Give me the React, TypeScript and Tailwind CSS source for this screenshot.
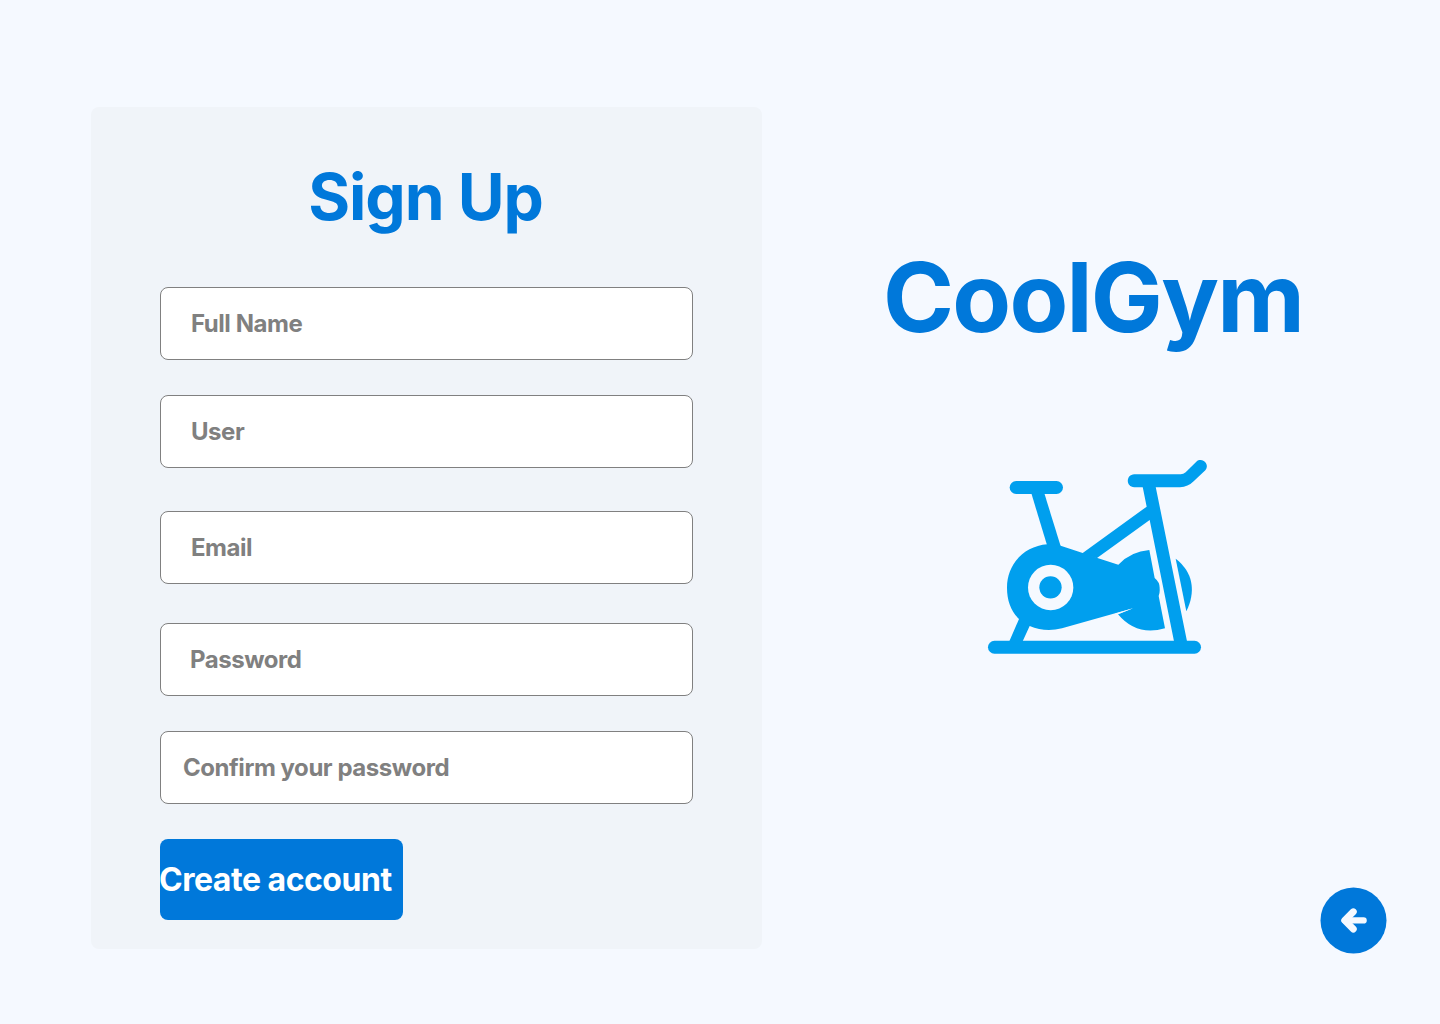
const fields = [
  { label: "Full Name", type: "text", box: "pl-[30px]" },
  { label: "User", type: "text", box: "mt-[35px] pl-[30px]" },
  { label: "Email", type: "email", box: "mt-[43px] pl-[30px]" },
  { label: "Password", type: "password", box: "mt-[39px] pl-[29px]" },
  { label: "Confirm your password", type: "password", box: "mt-[35px] pl-[22px]" },
];

function BikeLogo() {
  return (
    <svg viewBox="0 0 720 645" className="h-[215px] w-[240px]" fill="#009FEE" aria-label="Exercise bike">
      <rect x="89" y="93" width="160" height="39" rx="19.5" />
      <path d="M154 130H193L243 292H203Z" />
      <path d="M463 73H602Q610 73 617 67L649 35C667 20 691 44 676 61L641 94Q624 111 600 112H463C437 111 437 74 463 73Z" />
      <path d="M488 110H527L621 574H582L509 210L350 325L305 311L500 170Z" />
      <path d="M202 283Q224 281 242 287L308 309L350 323L415 344Q453 304 508 300L524 384Q540 397 539 416Q540 429 536 438L555 535Q470 560 414 493L459 475L246 535Q194 547 149 528L128 574H88L117 507C93 484 81 451 81 413C81 343 132 288 202 283Z" />
      <path d="M587 326C640 366 648 425 619 484Z" />
      <path d="M404 491L459 475L414 493Z" fill="#F5F9FF" />
      <circle cx="212" cy="412.500" r="68" fill="#F5F9FF" />
      <circle cx="211.500" cy="412" r="33.500" />
      <rect x="24" y="572.500" width="639" height="38.500" rx="19.250" />
    </svg>
  );
}

export default function App() {
  return (
    <main className="flex h-[1024px] w-[1440px] overflow-hidden bg-[#F5F9FF] pl-[91px] pt-[107px] font-['Inter',sans-serif] font-bold">
      <section className="h-[842px] w-[671px] shrink-0 rounded-lg bg-[#F0F4F9] px-[69px] pt-[51px]">
        <h1 className="pr-[2px] text-center text-[64px] leading-[77px] tracking-[-0.016em] text-[#0078DA]">Sign Up</h1>
        <form className="mt-[52px] flex flex-col items-start" onSubmit={(e) => e.preventDefault()}>
          {fields.map((f) => (
            <input
              key={f.label}
              type={f.type}
              aria-label={f.label}
              placeholder={f.label}
              className={`h-[73px] w-[533px] rounded-lg border border-[#808080] bg-white text-2xl tracking-[-0.019em] text-[#808080] outline-none placeholder:text-[#808080] placeholder:opacity-100 ${f.box}`}
            />
          ))}
          <button className="mt-[35px] h-[81px] w-[243px] whitespace-nowrap rounded-lg bg-[#0078DA] text-left -indent-px text-[32px] tracking-[-0.015em] text-white">
            Create account
          </button>
        </form>
      </section>
      <aside className="flex grow flex-col pt-[132px]">
        <h2 className="ml-[121px] text-[96px] leading-[116px] tracking-[-0.018em] text-[#0078DA]">CoolGym</h2>
        <div className="ml-[218px] mt-[95px]">
          <BikeLogo />
        </div>
        <button aria-label="Back" className="ml-[558px] mt-[222px] size-[67px] shrink-0">
          <svg viewBox="0 0 67 67" className="size-full">
            <circle cx="33.500" cy="33.500" r="33" fill="#0078DA" />
            <g fill="none" stroke="#F5F9FF" strokeLinecap="round" strokeLinejoin="round">
              <path d="M33.300 24.800L24.700 33.400L33.300 42" strokeWidth="6.900" />
              <path d="M25 33.400H43.600" strokeWidth="6.300" />
            </g>
          </svg>
        </button>
      </aside>
    </main>
  );
}
